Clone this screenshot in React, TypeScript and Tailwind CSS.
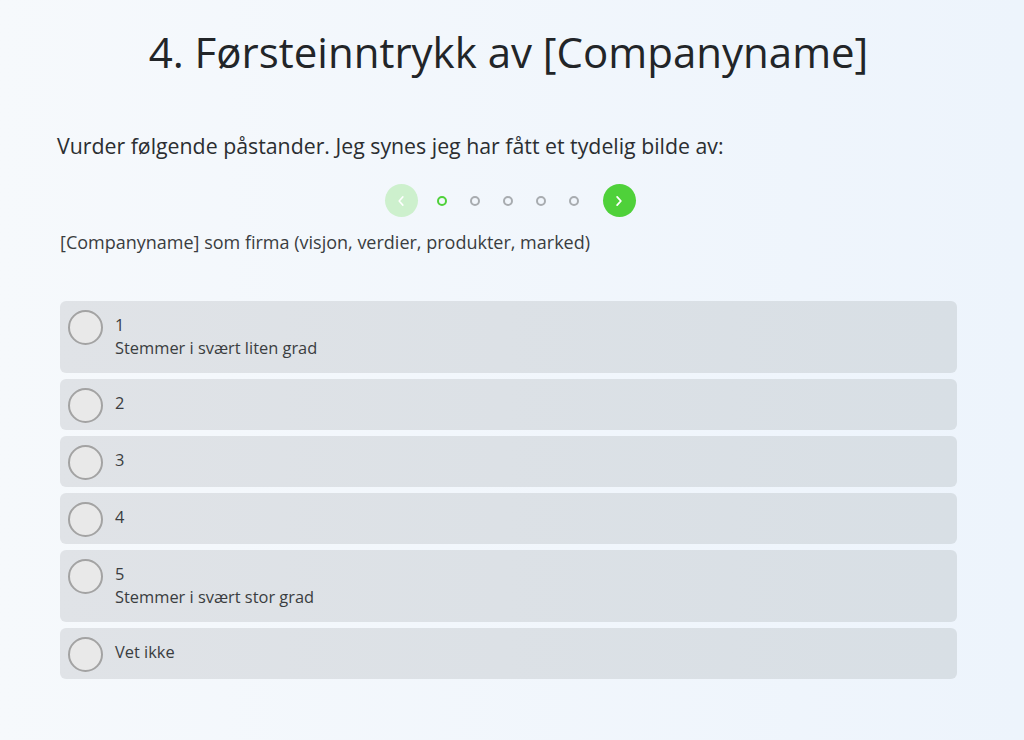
import React from 'react';

const options = [
  { value: '1', label: 'Stemmer i svært liten grad' },
  { value: '2' },
  { value: '3' },
  { value: '4' },
  { value: '5', label: 'Stemmer i svært stor grad' },
  { value: 'Vet ikke' },
];

const Pager = () => (
  <div className="flex items-center justify-center mt-[24px] pr-[4px]">
    <button className="w-[33px] h-[33px] rounded-full bg-[#cdf0cd] flex items-center justify-center">
      <svg width="18" height="18" viewBox="0 0 24 24" fill="none" stroke="#ffffff" strokeWidth="2" strokeLinecap="round" strokeLinejoin="round">
        <path d="M14.5 6.5l-5 5.5 5 5.5" />
      </svg>
    </button>
    <div className="flex items-center gap-[23px] ml-[19px] mr-[24px]">
      <span className="w-[10px] h-[10px] rounded-full border-2 border-[#4fd13a]"></span>
      <span className="w-[10px] h-[10px] rounded-full border-2 border-[#a8acb0]"></span>
      <span className="w-[10px] h-[10px] rounded-full border-2 border-[#a8acb0]"></span>
      <span className="w-[10px] h-[10px] rounded-full border-2 border-[#a8acb0]"></span>
      <span className="w-[10px] h-[10px] rounded-full border-2 border-[#a8acb0]"></span>
    </div>
    <button className="w-[33px] h-[33px] rounded-full bg-[#4fd13a] flex items-center justify-center">
      <svg width="18" height="18" viewBox="0 0 24 24" fill="none" stroke="#ffffff" strokeWidth="2.4" strokeLinecap="round" strokeLinejoin="round">
        <path d="M9.5 6.5l5 5.5-5 5.5" />
      </svg>
    </button>
  </div>
);

export default function App() {
  return (
    <div
      className="w-[1024px] h-[740px] overflow-hidden bg-gradient-to-r from-[#f6f9fc] to-[#edf4fc] text-[#2b2e31]"
      style={{ fontFamily: '"Open Sans", "Noto Sans", sans-serif' }}
    >
      <h1 className="text-[42px] leading-[54px] text-center pt-[25px] pr-[7px] text-[#222528]">
        4. Førsteinntrykk av [Companyname]
      </h1>

      <p className="text-[21.3px] leading-[28px] mt-[53px] ml-[57px] text-[#2b2e31]">
        Vurder følgende påstander. Jeg synes jeg har fått et tydelig bilde av:
      </p>

      <Pager />

      <p className="text-[18px] leading-[26px] mt-[12px] ml-[60px] text-[#3a3d40]">
        [Companyname] som firma (visjon, verdier, produkter, marked)
      </p>

      <div className="mt-[46px] ml-[60px] w-[897px] flex flex-col gap-[6px]">
        {options.map((o) => (
          <label
            key={o.value}
            className={`flex items-start gap-[12px] rounded-[6px] bg-gradient-to-r from-[#e0e3e7] to-[#d8dfe5] pl-[8px] pt-[9px] ${o.label ? 'h-[72px]' : 'h-[51px]'}`}
          >
            <span className="w-[35px] h-[35px] shrink-0 rounded-full border-2 border-[#a3a3a3] bg-[#e9e9e9]"></span>
            <span className="flex flex-col pt-[3px] text-[16.4px] leading-[23px] text-[#3a3d40]">
              <span>{o.value}</span>
              {o.label && <span>{o.label}</span>}
            </span>
          </label>
        ))}
      </div>
    </div>
  );
}
